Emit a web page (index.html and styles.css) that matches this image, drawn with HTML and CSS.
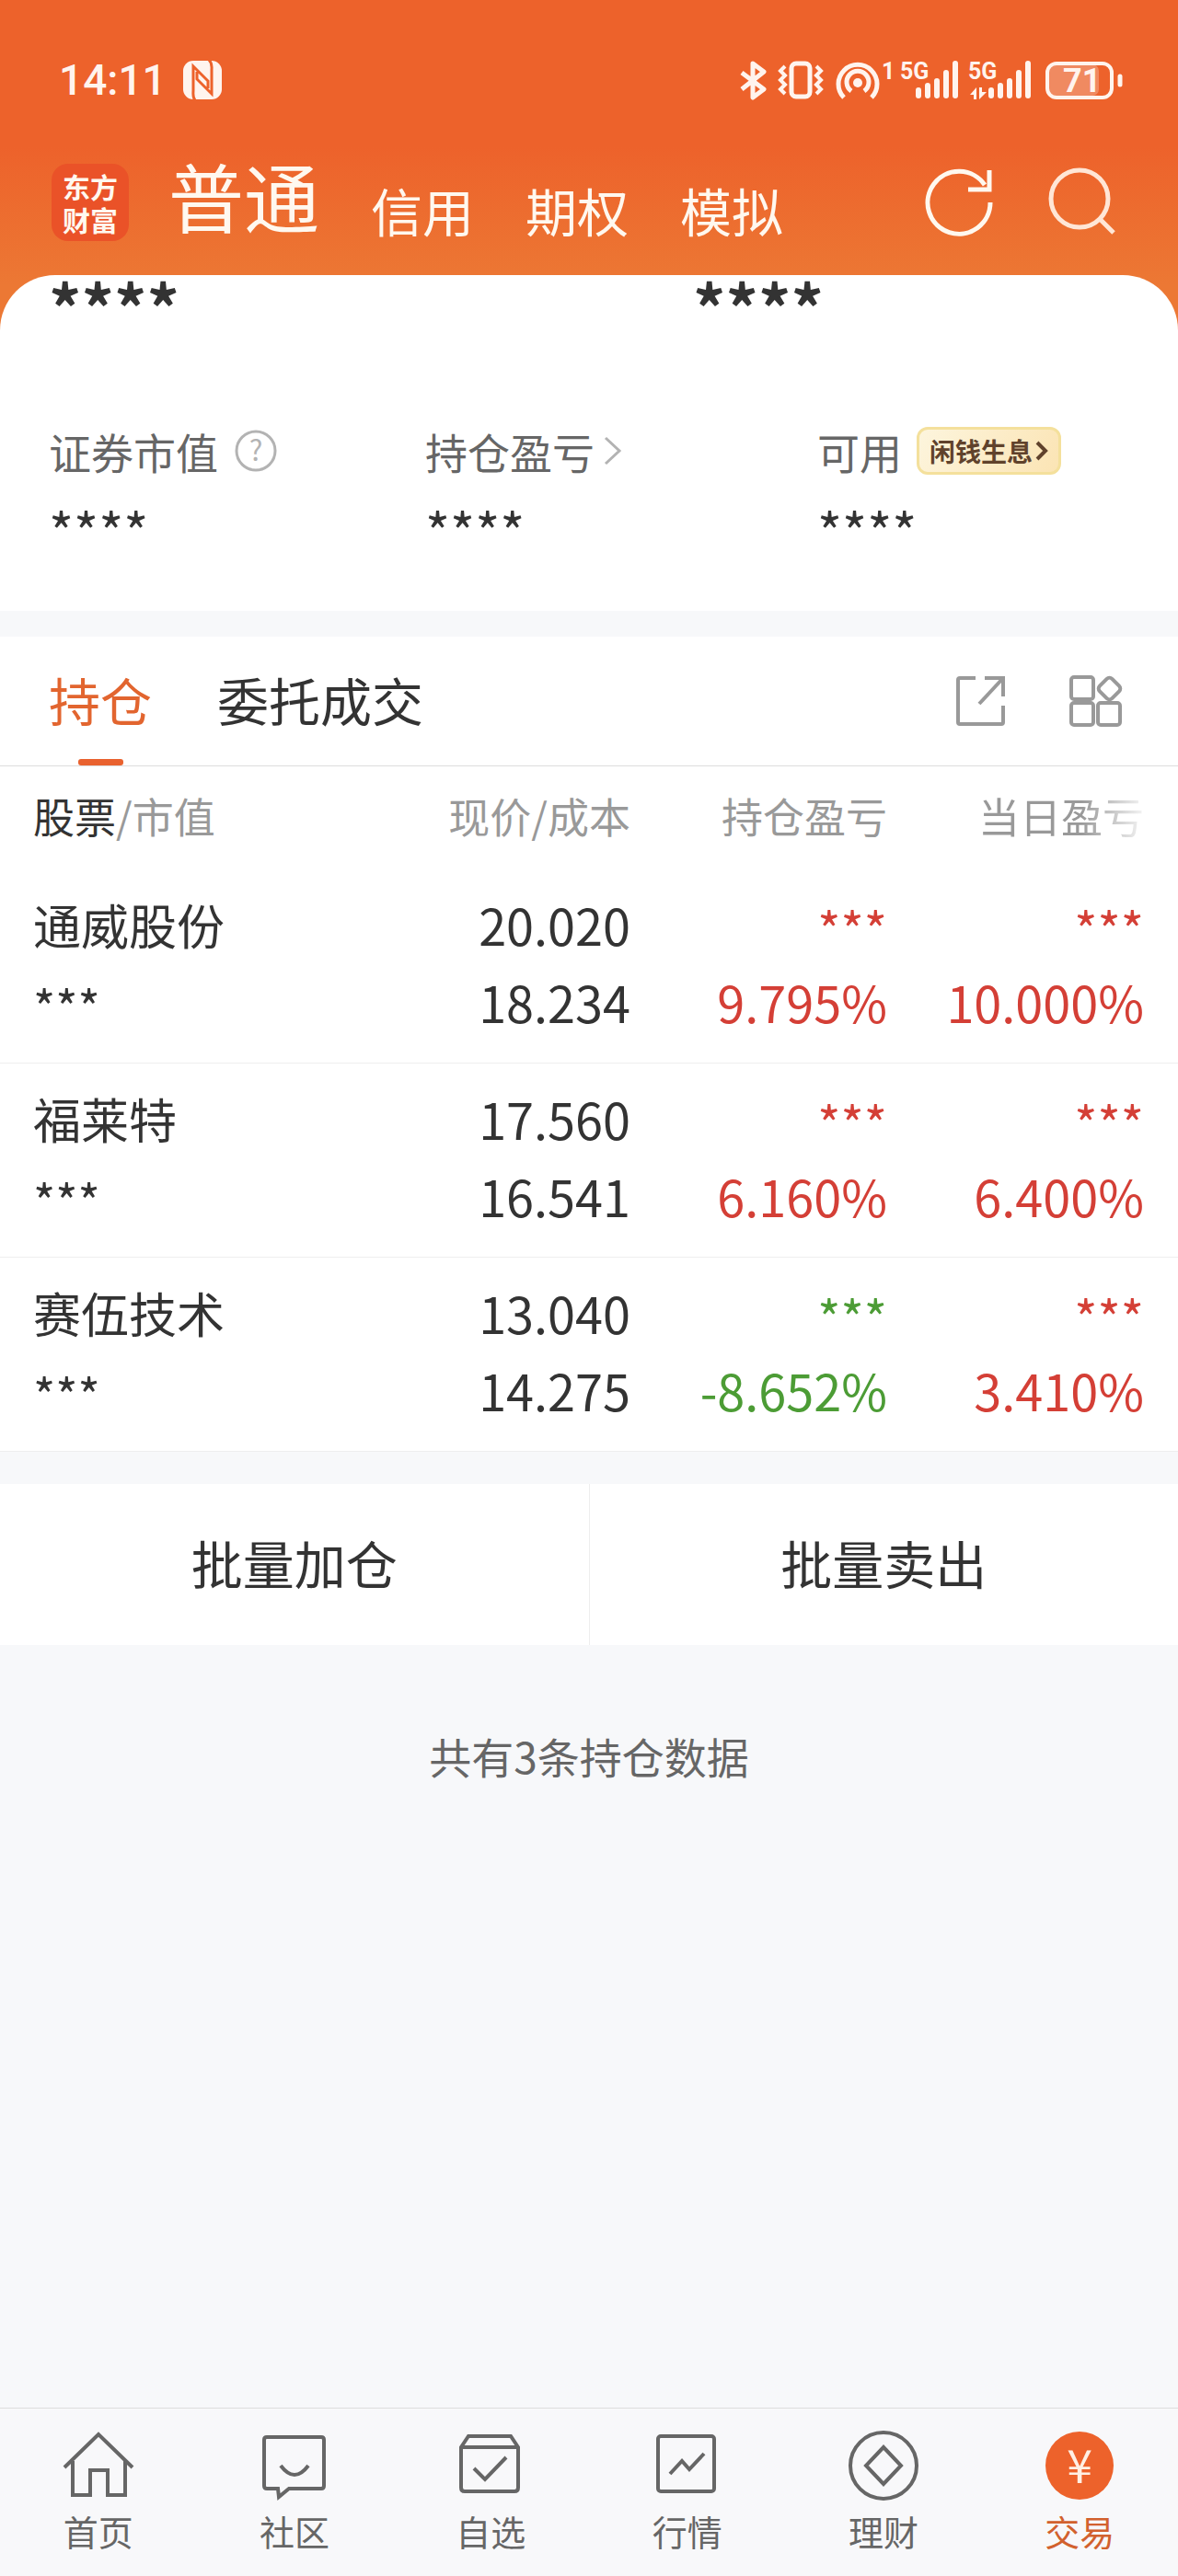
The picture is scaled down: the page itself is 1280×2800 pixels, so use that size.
FILE: index.html
```html
<!DOCTYPE html>
<html lang="zh-CN">
<head>
<meta charset="utf-8" />
<meta name="viewport" content="width=device-width" />
<title>交易-持仓</title>
<link rel="stylesheet" href="styles.css">
</head>
<body>
<div class="top">
	<div class="status">
		<span class="time">14:11</span>
		<svg class="nfc" width="42" height="42" viewBox="0 0 42 42">
			<rect width="42" height="42" rx="11" fill="#fff4ee"/>
			<path d="M13 43C10 40 11 36 11 32V6L27 22V30M28 -1C32 3 31 6 31 10V36L15 20V12" fill="none" stroke="#ed622b" stroke-width="3"/>
		</svg>
		<div class="status-right">
			<svg width="416" height="44" viewBox="0 0 416 44" fill="none" stroke="#fff4ee" stroke-width="4">
				<!-- 蓝牙 -->
				<path d="M2 14L26 32L14 41V4L26 13L2 32" stroke-width="5" stroke-linejoin="round"/>
				<!-- 振动 -->
				<rect x="56" y="4" width="20" height="36" rx="5" stroke-width="5"/>
				<path d="M49 7L44 12L49 17L44 22L49 27L44 32L49 37M83 7L88 12L83 17L88 22L83 27L88 32L83 37"/>
				<!-- 热点 -->
				<circle cx="128" cy="25" r="5" fill="#fff4ee" stroke="none"/>
				<path d="M113 41A21 21 0 1 1 143 41M121 34A12 12 0 1 1 135 34" stroke-width="5"/>
				<!-- 信号 -->
				<g stroke-width="6" stroke-linecap="round">
					<path d="M194 33V39M204 28V39M214 23V39M224 14V39M234 4V39"/>
					<path d="M273 33V39M283 28V39M293 23V39M303 14V39M313 4V39"/>
				</g>
				<path d="M250 38L257 30V43H254V38ZM260 30V43L268 35H263V30Z" fill="#fff4ee" stroke="none"/>
				<!-- 电池 -->
				<rect x="335" y="5" width="55" height="34" rx="7" fill="#f08a61" stroke="none"/>
				<rect x="334" y="4" width="70" height="37" rx="10" stroke-width="4"/>
				<path d="M413 18V27" stroke-width="5" stroke-linecap="round"/>
				<g class="status-text" fill="#fff4ee" stroke="none">
					<text x="154" y="21">1</text>
					<text x="174" y="21">5G</text>
					<text x="248" y="21">5G</text>
					<text class="battery" x="351" y="35">71</text>
				</g>
			</svg>
		</div>
	</div>
	<header class="header">
		<a class="logo" href="#">东方<br>财富</a>
		<nav class="account">
			<a class="on" href="#">普通</a>
			<a href="#">信用</a>
			<a href="#">期权</a>
			<a href="#">模拟</a>
		</nav>
		<button class="icon-btn" aria-label="刷新">
			<svg width="76" height="76" viewBox="0 0 76 76" fill="none" stroke="#fff8ef" stroke-width="5">
				<path d="M72 38A34 34 0 1 1 66 19M71 3V24H48"/>
			</svg>
		</button>
		<button class="icon-btn" aria-label="搜索">
			<svg width="76" height="76" viewBox="0 0 76 76" fill="none" stroke="#ffe6d6" stroke-width="5">
				<circle cx="35" cy="34" r="31"/><path d="M57 56L72 71"/>
			</svg>
		</button>
	</header>
	<section class="summary">
		<div class="total"><span>****</span><span>****</span></div>
		<div class="assets">
			<div>
				<p class="label">证券市值
					<svg width="46" height="46" viewBox="0 0 46 46">
						<circle cx="23" cy="23" r="21" fill="none" stroke="#b3b3b3" stroke-width="3"/>
						<text class="help" x="23" y="34">?</text>
					</svg>
				</p>
				<p class="value">****</p>
			</div>
			<div>
				<p class="label">持仓盈亏
					<svg class="more" width="20" height="32" viewBox="0 0 20 32" fill="none" stroke="#b3b3b3" stroke-width="3"><path d="M2 2L17 16L2 30"/></svg>
				</p>
				<p class="value">****</p>
			</div>
			<div>
				<p class="label">可用
					<a class="badge" href="#">闲钱生息<svg width="14" height="22" viewBox="0 0 14 22" fill="none" stroke="#60422c" stroke-width="4"><path d="M2 2L11 11L2 20"/></svg></a>
				</p>
				<p class="value">****</p>
			</div>
		</div>
	</section>
</div>

<section class="holding">
	<div class="tabs">
		<button class="tab on">持仓</button>
		<button class="tab">委托成交</button>
		<button class="icon-btn share" aria-label="分享">
			<svg width="58" height="58" viewBox="0 0 58 58" fill="none" stroke="#999" stroke-width="4">
				<path d="M23 4H6Q4 4 4 6V52Q4 54 6 54H51Q53 54 53 52V34M33 4H53V24M53 4L27 32"/>
			</svg>
		</button>
		<button class="icon-btn" aria-label="更多功能">
			<svg width="58" height="58" viewBox="0 0 58 58" fill="none" stroke="#999" stroke-width="4">
				<rect x="2" y="3" width="24" height="24" rx="3"/>
				<rect x="2" y="31" width="24" height="24" rx="3"/>
				<rect x="31" y="31" width="24" height="24" rx="3"/>
				<rect x="34" y="6" width="19" height="19" rx="4" transform="rotate(45 43.5 15.5)"/>
			</svg>
		</button>
	</div>
	<table class="list">
		<colgroup><col class="stock"><col><col class="pl"><col class="today"></colgroup>
		<thead>
			<tr><th><b>股票</b>/市值</th><th>现价/成本</th><th>持仓盈亏</th><th><span class="fade">当日盈亏</span></th></tr>
		</thead>
		<tbody>
			<tr>
				<td><div class="name">通威股份</div><div class="name mask">***</div></td>
				<td><div>20.020</div><div>18.234</div></td>
				<td class="up"><div class="mask">***</div><div>9.795%</div></td>
				<td class="up"><div class="mask">***</div><div>10.000%</div></td>
			</tr>
			<tr>
				<td><div class="name">福莱特</div><div class="name mask">***</div></td>
				<td><div>17.560</div><div>16.541</div></td>
				<td class="up"><div class="mask">***</div><div>6.160%</div></td>
				<td class="up"><div class="mask">***</div><div>6.400%</div></td>
			</tr>
			<tr>
				<td><div class="name">赛伍技术</div><div class="name mask">***</div></td>
				<td><div>13.040</div><div>14.275</div></td>
				<td class="down"><div class="mask">***</div><div>-8.652%</div></td>
				<td class="up"><div class="mask">***</div><div>3.410%</div></td>
			</tr>
		</tbody>
	</table>
</section>

<div class="batch">
	<button>批量加仓</button>
	<button>批量卖出</button>
</div>
<p class="count">共有3条持仓数据</p>

<nav class="tabbar">
	<a href="#">
		<svg viewBox="0 0 76 76"><path d="M1 40L38 4L75 40M10 33V70H29V43H48V70H67V33"/></svg>
		首页
	</a>
	<a href="#">
		<svg viewBox="0 0 76 76"><path d="M20 63H8Q5 63 5 60V10Q5 7 8 7H67Q70 7 70 10V60Q70 63 67 63H32L21 72ZM23 38Q38 58 53 38"/></svg>
		社区
	</a>
	<a href="#">
		<svg viewBox="0 0 76 76"><path d="M6 18L14 6H60L68 18V62Q68 66 64 66H10Q6 66 6 62ZM6 18H68M20 41L32 53L55 29"/></svg>
		自选
	</a>
	<a href="#">
		<svg viewBox="0 0 76 76"><rect x="6" y="6" width="61" height="60" rx="3"/><path d="M19 47L32 33L40 42L56 25"/></svg>
		行情
	</a>
	<a href="#">
		<svg viewBox="0 0 76 76"><circle cx="38" cy="38" r="36"/><path d="M38 18L57 38L38 58L19 38Z"/></svg>
		理财
	</a>
	<a class="on" href="#">
		<svg viewBox="0 0 76 76"><circle cx="38" cy="38" r="37"/><text x="38" y="57">¥</text></svg>
		交易
	</a>
</nav>
</body>
</html>
```
FILE: styles.css
```css
*{ box-sizing: border-box; margin: 0; padding: 0;}
body{ display: flex; flex-direction: column; min-height: 100vh; background: #f7f8fa; color: #333; font-family: "Noto Sans CJK SC", "Noto Sans", sans-serif;}
a{ color: inherit; text-decoration: none;}
button{ border: 0; background: none; color: inherit; font: inherit; cursor: pointer;}
svg{ display: block; flex: none; overflow: visible;}

/* 顶部 */
.top{ background: linear-gradient(#ed622b 160px, #ec7834 310px);}
.status{ display: flex; align-items: center; height: 164px; padding: 10px 60px 0 64px; color: #fff4ee;}
.time{ font: 500 46px/54px Roboto, sans-serif;}
.nfc{ margin-left: 18px; overflow: hidden;}
.status-right{ margin-left: auto;}
.status-text{ font: 700 25px Roboto, sans-serif;}
.status-text .battery{ font-size: 36px;}
.header{ display: flex; align-items: center; padding: 0 66px 23px 56px; color: #fff8ef;}
.logo{ width: 84px; height: 84px; padding-top: 6px; border-radius: 18px; background: #ea5228; font-size: 30px; font-weight: 700; line-height: 36px; text-align: center;}
.account{ display: flex; align-items: flex-end; gap: 56px; height: 112px; margin: 0 auto 0 43px; padding-bottom: 16px; font-size: 56px; line-height: 64px;}
.account .on{ font-size: 82px; line-height: 96px;}
.header .icon-btn{ margin-left: 58px;}

/* 资产 */
.summary{ padding: 0 53px 56px; border-radius: 60px 60px 0 0; background: #fff;}
.total{ display: grid; grid-template-columns: 700px 1fr; font-size: 70px; font-weight: 700; line-height: 66px;}
.assets{ display: grid; grid-template-columns: 409px 426px 1fr; margin-top: 93px;}
.label{ display: flex; align-items: center; margin-bottom: 22px; color: #666; font-size: 46px; line-height: 64px; white-space: nowrap;}
.label svg{ margin-left: 18px;}
.label .more{ margin-left: 10px;}
.help{ fill: #b3b3b3; font-size: 31px; text-anchor: middle;}
.value{ font-size: 58px; line-height: 64px;}
.badge{ display: flex; align-items: center; height: 52px; margin-left: 16px; padding: 0 11px; border: 3px solid #f4e09c; border-radius: 12px; background: linear-gradient(120deg, #fdf5dd, #fbe4b4); color: #60422c; font-size: 28px; font-weight: 700;}
.label .badge svg{ margin-left: 3px;}

/* 持仓 */
.holding{ margin-top: 28px; background: #fff;}
.tabs{ display: flex; align-items: center; height: 141px; padding: 0 60px 0 53px; border-bottom: 1px solid #ddd;}
.tab{ position: relative; height: 140px; margin-right: 71px; padding-bottom: 6px; font-size: 56px;}
.tab.on{ color: #e2652f;}
.tab.on::after{ content: ""; position: absolute; left: 50%; bottom: 0; width: 49px; height: 7px; margin-left: -24px; border-radius: 3px; background: #e9622f;}
.share{ margin-left: auto; margin-right: 67px;}
.list{ width: 100%; border-collapse: separate; border-spacing: 0; table-layout: fixed; font-size: 54px;}
.stock{ width: 30%;}
.pl{ width: 279px;}
.today{ width: 316px;}
.list th{ padding-bottom: 4px; color: #999; font-size: 45px; font-weight: 400; line-height: 108px; text-align: right; white-space: nowrap;}
.list th b{ color: #333; font-weight: 400;}
.list td{ padding: 18px 0 24px; border-bottom: 1px solid #eee; line-height: 84px; text-align: right; white-space: nowrap;}
.list th:first-child, .list td:first-child{ padding-left: 36px; text-align: left;}
.list th:last-child, .list td:last-child{ padding-right: 37px;}
.list .name{ font-size: 52px;}
/* 星号偏上，往下压一点 */
.list .mask{ padding-top: 8px; line-height: 76px;}
.fade{ -webkit-mask-image: linear-gradient(to right, #000 62%, rgba(0,0,0,.1)); mask-image: linear-gradient(to right, #000 62%, rgba(0,0,0,.1));}
.up{ color: #d43f36;}
.down{ color: #4c9c35;}

.batch{ display: flex; margin-top: 35px; background: #fff;}
.batch button{ flex: 1; height: 175px; padding-bottom: 6px; font-size: 56px;}
.batch button + button{ border-left: 1px solid #eee;}
.count{ margin-top: 88px; color: #666; font-size: 46px; line-height: 64px; text-align: center;}

/* 底部导航 */
.tabbar{ display: flex; margin-top: auto; border-top: 1px solid #ddd; background: #f8f8fa;}
.tabbar a{ display: flex; flex: 1; flex-direction: column; align-items: center; padding: 24px 0 18px; color: #666; font-size: 38px; line-height: 62px;}
.tabbar svg{ width: 76px; height: 76px; margin-bottom: 2px; fill: none; stroke: #666; stroke-width: 4;}
.tabbar .on{ color: #d2612e;}
.tabbar .on svg{ fill: #ed622b; stroke: none;}
.tabbar .on text{ fill: #fff0e4; font-size: 50px; text-anchor: middle;}
```
